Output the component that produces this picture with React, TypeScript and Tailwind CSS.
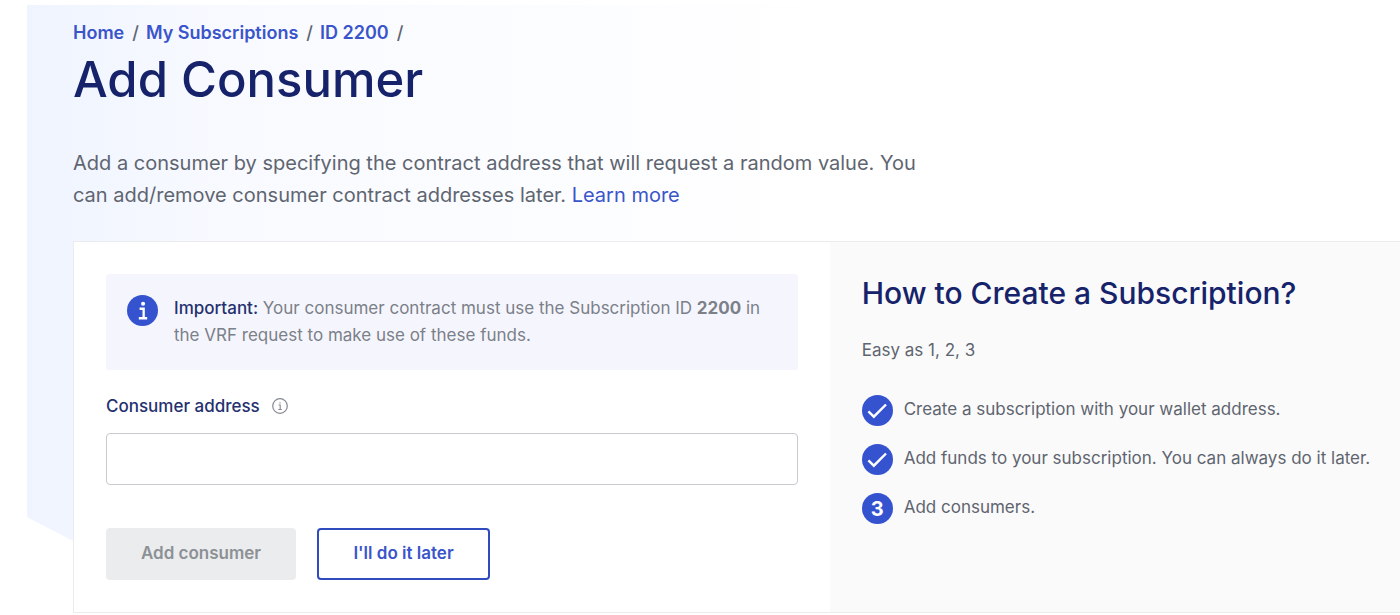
import React, { useState } from 'react';

const steps = [
  { text: 'Create a subscription with your wallet address.', done: true },
  { text: 'Add funds to your subscription. You can always do it later.', done: true },
  { text: 'Add consumers.', done: false },
];

const breadcrumbs = ['Home', 'My Subscriptions', 'ID 2200'];

const InfoBadge: React.FC = () => (
  <svg className="size-[31px] shrink-0" viewBox="0 0 32 32" aria-hidden="true">
    <circle cx="16" cy="16" r="16" fill="#3553cf" />
    <circle cx="16.6" cy="9" r="2.1" fill="#fff" />
    <path d="M13 14.2h4.2v9.6M12.2 24h8.6" fill="none" stroke="#fff" strokeWidth="2.4" />
  </svg>
);

const StepBadge: React.FC<{ done: boolean; number: number }> = ({ done, number }) => (
  <span className="flex size-[31px] shrink-0 items-center justify-center rounded-full bg-[#3553cf] text-xl font-bold text-white">
    {done ? (
      <svg className="size-[31px]" viewBox="0 0 32 32" aria-hidden="true">
        <path d="M6.6 17l5.6 5.4L24.8 9.8" fill="none" stroke="#fff" strokeWidth="2.5" />
      </svg>
    ) : (
      number
    )}
  </span>
);

const App: React.FC = () => {
  const [address, setAddress] = useState('');

  return (
    <div className="bg-white pt-[5px] pl-[27px] font-['Inter',sans-serif] text-[17px] text-[#5f6570]">
      <div className="relative pl-[46px]">
        {/* Fondo degradado con la esquina inferior cortada */}
        <div className="absolute inset-x-0 top-0 h-[560px] bg-linear-to-r from-[#eff4ff] via-[#f8faff] via-15% to-white to-60% [clip-path:polygon(0_0,100%_0,100%_100%,92px_100%,0_512px)]" />

        <main className="relative pt-4">
          <nav aria-label="Breadcrumb">
            <ol className="flex gap-[7px] text-lg leading-6 font-semibold text-[#3a55cb]">
              {breadcrumbs.map((item) => (
                <li key={item} className="flex gap-2">
                  <a href="#">{item}</a>
                  <span className="font-medium text-[#5f6570]">/</span>
                </li>
              ))}
            </ol>
          </nav>

          <h1 className="text-[49px] leading-[70px] font-medium text-[#16236b]">Add Consumer</h1>

          <p className="mt-8 max-w-[850px] text-xl leading-8">
            Add a consumer by specifying the contract address that will request a random value. You
            can add/remove consumer contract addresses later.{' '}
            <a href="#" className="text-[#3a55cb]">Learn more</a>
          </p>

          <div className="mt-[30px] grid grid-cols-[53fr_40fr] border-y border-l border-[#ececee] bg-white">
            <form className="p-8" onSubmit={(e) => e.preventDefault()}>
              <div className="flex gap-4 rounded bg-[#f5f6fd] p-[21px] leading-[27px] text-[#7b8089]">
                <InfoBadge />
                <p>
                  <span className="font-medium text-[#25316f]">Important:</span> Your consumer contract must
                  use the Subscription ID <strong className="font-bold">2200</strong> in the VRF request to
                  make use of these funds.
                </p>
              </div>

              <div className="mt-6 flex items-center gap-3 leading-6">
                <label htmlFor="address" className="font-medium text-[#25316f]">Consumer address</label>
                <svg className="size-4" viewBox="0 0 16 16" fill="none" stroke="#858a91" aria-hidden="true">
                  <circle cx="8" cy="8" r="7.3" strokeWidth="1.2" />
                  <path d="M6.6 7h1.6v4.4M6.4 11.5h3.4M8 4.2v1.4" strokeWidth="1.1" />
                </svg>
              </div>
              <input
                id="address"
                type="text"
                value={address}
                onChange={(e) => setAddress(e.target.value)}
                className="mt-[15px] h-[52px] w-full rounded border border-[#c9cacd] bg-white px-4"
              />

              <div className="mt-[43px] flex gap-[21px] font-semibold">
                <button type="submit" disabled={!address} className="h-[52px] w-[190px] rounded bg-[#ebeced] text-[#8c9196]">
                  Add consumer
                </button>
                <button type="button" className="h-[52px] w-[173px] rounded border-2 border-[#2f4bbd] bg-white text-[#3a55cb]">
                  I'll do it later
                </button>
              </div>
            </form>

            <aside className="bg-[#fafafa] pt-8 pl-8">
              <h2 className="text-3xl leading-[38px] font-medium text-[#16236b]">How to Create a Subscription?</h2>
              <p className="mt-[26px] leading-6">Easy as 1, 2, 3</p>
              <ol className="mt-[33px] flex flex-col gap-[18px]">
                {steps.map((step, i) => (
                  <li key={step.text} className="flex gap-[11px] leading-7">
                    <StepBadge done={step.done} number={i + 1} />
                    {step.text}
                  </li>
                ))}
              </ol>
            </aside>
          </div>
        </main>
      </div>
    </div>
  );
};

export default App;
